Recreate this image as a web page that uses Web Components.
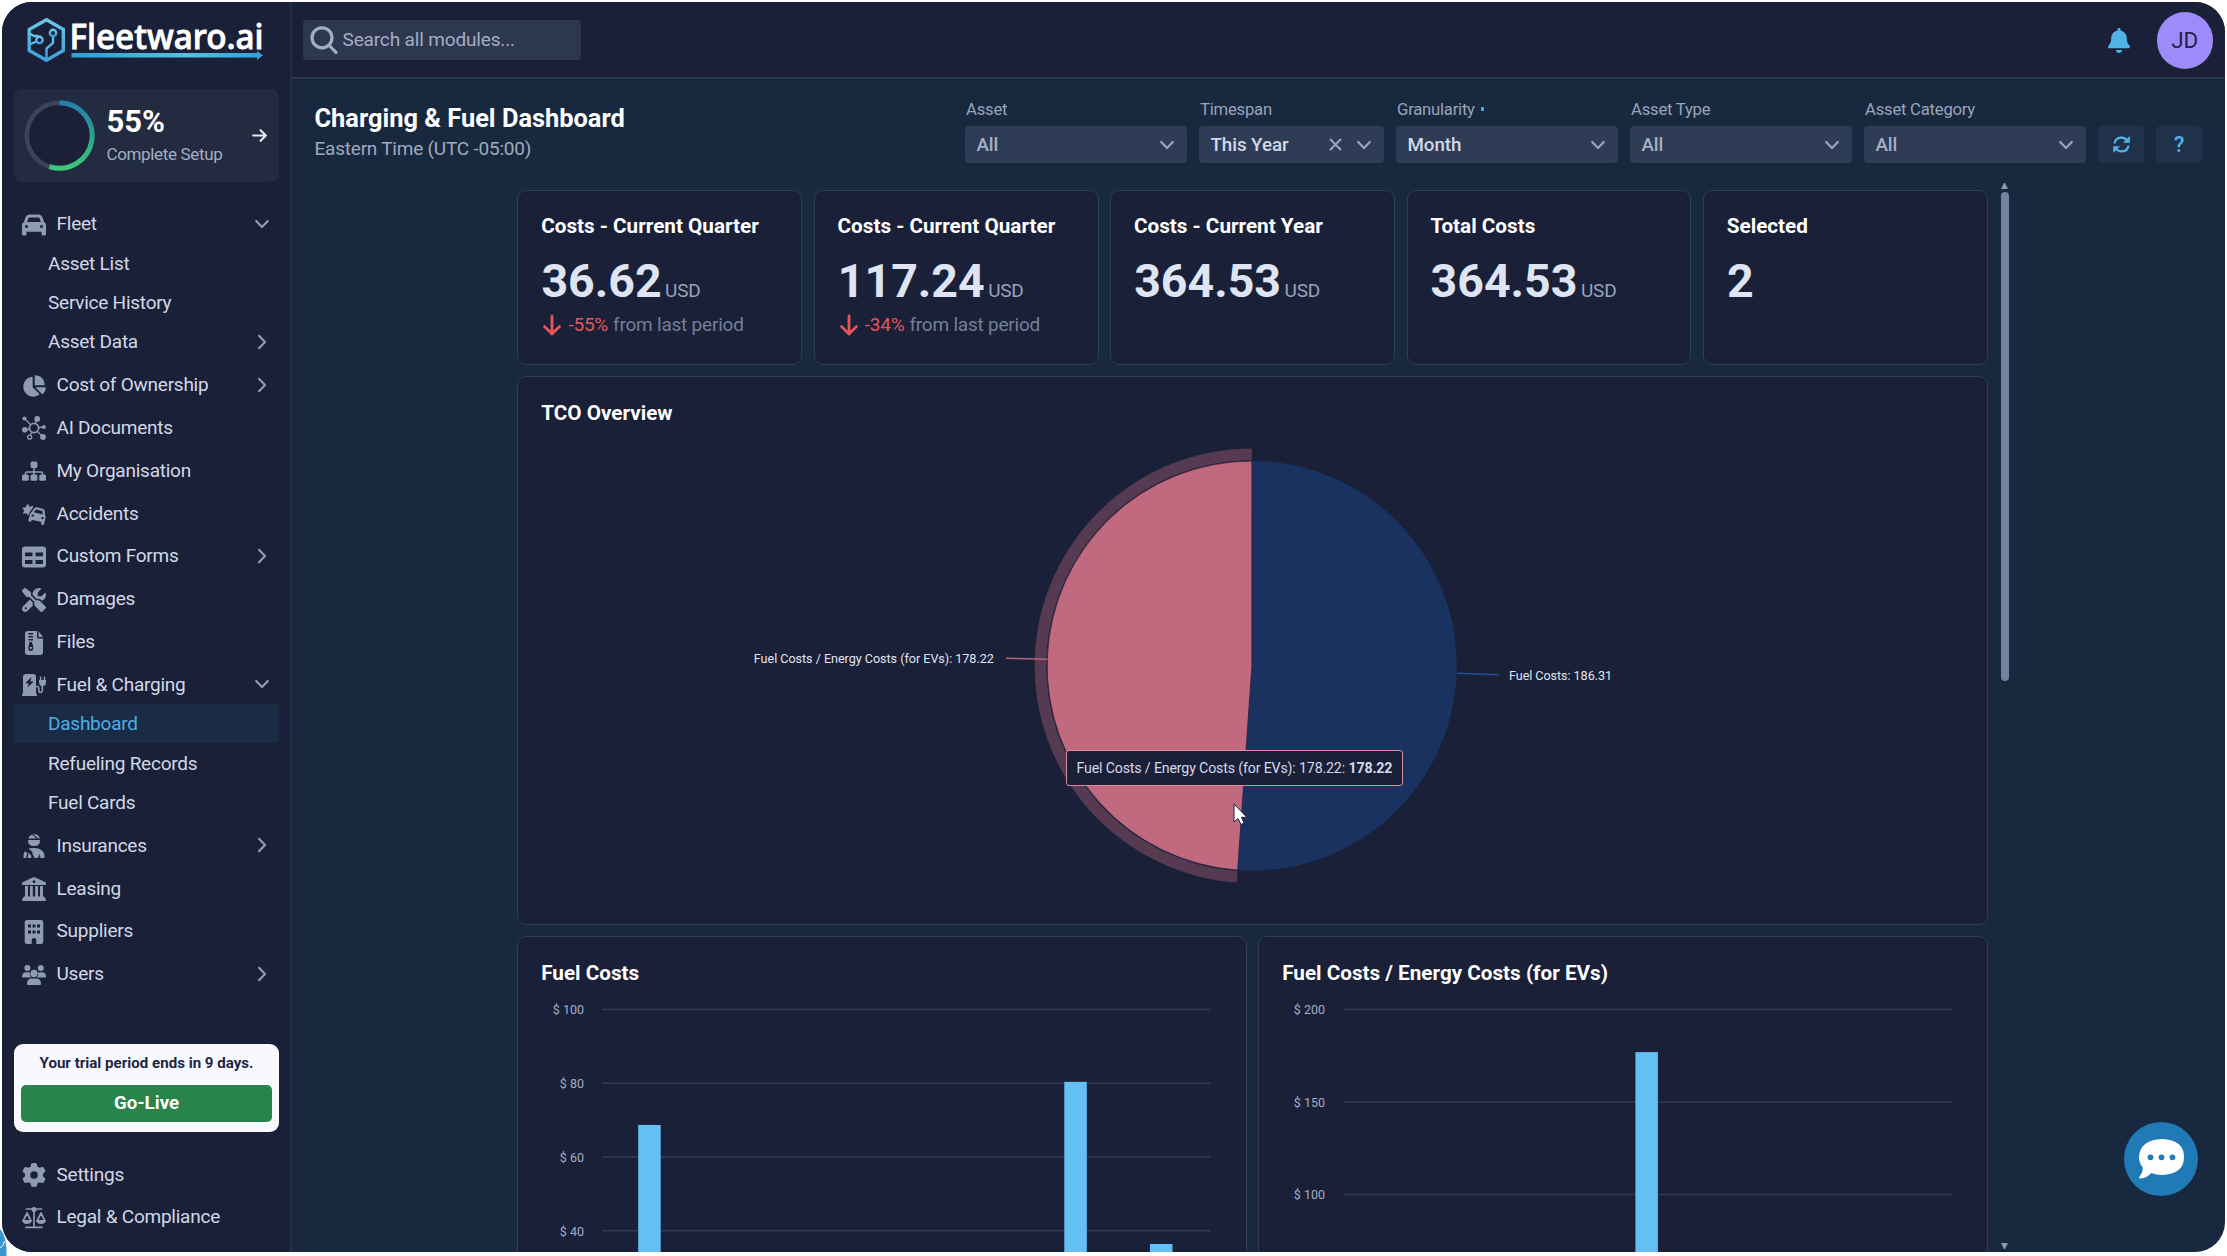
<!DOCTYPE html>
<html lang="en">
<head>
<meta charset="utf-8">
<title>Charging &amp; Fuel Dashboard</title>
<style>
html,body{ margin:0; height:100%; background:#fff; overflow:hidden }
body{ font-family:Roboto, "Liberation Sans", sans-serif; color:#d3d8e6; padding:2px; box-sizing:border-box; position:relative }
.corner{ position:absolute; left:0; bottom:0; width:8px; height:30px }
</style>
</head>
<body>
<svg class="corner" viewBox="0 0 8 30"><path d="M0 3Q7 10 6.500 30H0z" fill="#3b97cf"/><path d="M0 22Q4 20 4.500 15" stroke="#fff" fill="none"/></svg>
<fw-app>
  <fw-sidebar slot="side">
    <fw-setup percent="55" label="Complete Setup"></fw-setup>
    <fw-nav-item icon="car" arrow="down">Fleet</fw-nav-item>
    <fw-nav-item sub>Asset List</fw-nav-item>
    <fw-nav-item sub>Service History</fw-nav-item>
    <fw-nav-item sub arrow="right">Asset Data</fw-nav-item>
    <fw-nav-item icon="pie" arrow="right">Cost of Ownership</fw-nav-item>
    <fw-nav-item icon="nodes">AI Documents</fw-nav-item>
    <fw-nav-item icon="sitemap">My Organisation</fw-nav-item>
    <fw-nav-item icon="crash">Accidents</fw-nav-item>
    <fw-nav-item icon="table" arrow="right">Custom Forms</fw-nav-item>
    <fw-nav-item icon="tools">Damages</fw-nav-item>
    <fw-nav-item icon="zip">Files</fw-nav-item>
    <fw-nav-item icon="station" arrow="down">Fuel &amp; Charging</fw-nav-item>
    <fw-nav-item sub active>Dashboard</fw-nav-item>
    <fw-nav-item sub>Refueling Records</fw-nav-item>
    <fw-nav-item sub>Fuel Cards</fw-nav-item>
    <fw-nav-item icon="injured" arrow="right">Insurances</fw-nav-item>
    <fw-nav-item icon="bank">Leasing</fw-nav-item>
    <fw-nav-item icon="building">Suppliers</fw-nav-item>
    <fw-nav-item icon="users" arrow="right">Users</fw-nav-item>
    <fw-trial slot="foot" text="Your trial period ends in 9 days.">Go-Live</fw-trial>
    <fw-nav-item slot="foot" icon="gear">Settings</fw-nav-item>
    <fw-nav-item slot="foot" icon="scale">Legal &amp; Compliance</fw-nav-item>
  </fw-sidebar>

  <fw-topbar slot="top" initials="JD">Search all modules...</fw-topbar>

  <fw-page-head slot="head" heading="Charging &amp; Fuel Dashboard" sub="Eastern Time (UTC -05:00)">
    <fw-select label="Asset" empty>All</fw-select>
    <fw-select label="Timespan" clear style="width:185px">This Year</fw-select>
    <fw-select label="Granularity" required>Month</fw-select>
    <fw-select label="Asset Type" empty>All</fw-select>
    <fw-select label="Asset Category" empty>All</fw-select>
    <fw-tool icon="refresh"></fw-tool>
    <fw-tool>?</fw-tool>
  </fw-page-head>

  <fw-grid>
    <fw-stat heading="Costs - Current Quarter" unit="USD" delta="-55%">36.62</fw-stat>
    <fw-stat heading="Costs - Current Quarter" unit="USD" delta="-34%">117.24</fw-stat>
    <fw-stat heading="Costs - Current Year" unit="USD">364.53</fw-stat>
    <fw-stat heading="Total Costs" unit="USD">364.53</fw-stat>
    <fw-stat heading="Selected">2</fw-stat>
    <fw-card heading="TCO Overview" style="grid-column:1/-1; height:548.7px"><fw-pie></fw-pie></fw-card>
    <fw-card heading="Fuel Costs" style="grid-column:1/6; height:560px">
      <fw-bars max="100" min="40" step="20" gap="73.7" bars="120.2:68.7,546.3:80.4,632:36.4"></fw-bars>
    </fw-card>
    <fw-card heading="Fuel Costs / Energy Costs (for EVs)" style="grid-column:6/11; height:560px">
      <fw-bars max="200" min="100" step="50" gap="92.4" bars="376.4:177"></fw-bars>
    </fw-card>
  </fw-grid>
</fw-app>

<script>
// icons: [viewBox, markup]
const ICONS = {
  car:["0 0 512 512",'<path d="M135.2 117.4L109.1 192H402.9l-26.1-74.6C372.300 104.600 360.200 96 346.600 96H165.400c-13.600 0-25.700 8.600-30.200 21.400zM39.600 196.800L74.800 96.300C88.300 57.800 124.600 32 165.400 32H346.600c40.800 0 77.100 25.800 90.600 64.300l35.200 100.500c23.200 9.600 39.600 32.500 39.600 59.200V400v48c0 17.700-14.300 32-32 32H448c-17.700 0-32-14.300-32-32V400H96v48c0 17.700-14.300 32-32 32H32c-17.700 0-32-14.300-32-32V400 256c0-26.700 16.400-49.600 39.600-59.200zM128 288a32 32 0 1 0 -64 0 32 32 0 1 0 64 0zm288 32a32 32 0 1 0 0-64 32 32 0 1 0 0 64z"/>'],
  pie:["0 0 576 512",'<path d="M304 240V16.6c0-9 7-16.6 16-16.6C443.7 0 544 100.3 544 224c0 9-7.6 16-16.6 16H304zM32 272C32 150.700 122.100 50.300 239 34.300c9.200-1.300 17 6.100 17 15.400V288L412.500 444.500c6.700 6.700 6.200 17.700-1.500 23.100C371.800 495.600 323.800 512 272 512C139.500 512 32 404.600 32 272zm526.400 16c9.300 0 16.600 7.800 15.400 17c-7.700 55.900-34.600 105.600-73.900 142.300c-6 5.600-15.400 5.200-21.200-.7L320 288H558.400z"/>'],
  nodes:["0 0 24 24",'<g stroke="currentColor" stroke-width="1.300" fill="none"><circle cx="12" cy="12" r="4.600" stroke-width="1.700"/><path d="M3 3l5.700 5.700M15 2.800l-1.500 4.900M3 14l4.500-1M16.700 11.500l5-.5M15.200 15.300l5.300 5.200M9.800 16.100L8 20"/><circle cx="7.700" cy="21.200" r="2"/></g><circle cx="2.400" cy="2.400" r="2"/><circle cx="15.200" cy="2.900" r="2.900"/><circle cx="2.800" cy="13.800" r="2.800"/><circle cx="21.900" cy="11" r="2"/><circle cx="21" cy="21" r="2.900"/>'],
  sitemap:["0 0 24 24",'<rect x="8.600" y="2.500" width="6.800" height="6.500" rx="1.500"/><path d="M12 9v7M3.400 16v-1.300q0-1.700 1.700-1.700h13.800q1.700 0 1.700 1.700V16" fill="none" stroke="currentColor" stroke-width="1.500"/><rect y="15.500" width="6.800" height="6.300" rx="1.500"/><rect x="8.600" y="15.500" width="6.800" height="6.300" rx="1.500"/><rect x="17.200" y="15.500" width="6.800" height="6.300" rx="1.500"/>'],
  crash:["0 0 24 24",'<path d="M5.500 1.500l2.100 3.200 3.900-.9-1.200 3L8 9.500l-1.700 4.200-2-2.500-3.600.5 1.700-3.200L0 5.800l3.800-.5z"/><g transform="rotate(14 15 13)"><path fill-rule="evenodd" d="M8.700 12l2.100-4.800Q11.600 5.500 13.500 5.500h5.300q1.900 0 2.700 1.700L23 11.500q1 .8 1 2.200v6.500q0 1-1 1h-1q-1 0-1-1v-1.400H11v1.400q0 1-1 1H9q-1 0-1-1v-6q0-1.400.7-2.200zM11.200 11.200h9.300l-1.200-3.300H12.600zM10.900 13.500a1.200 1.200 0 1 0 .1 0zM21 13.500a1.200 1.200 0 1 0 .1 0z"/></g>'],
  table:["0 0 24 24",'<path fill-rule="evenodd" d="M3 1.500H21Q24 1.500 24 4.500V19.500Q24 22.500 21 22.500H3Q0 22.500 0 19.500V4.500Q0 1.500 3 1.500zM3 7.500V11.300H10.500V7.500zM13.500 7.500V11.300H21V7.500zM3 15V19H10.500V15zM13.500 15V19H21V15z"/>'],
  tools:["0 0 512 512",'<path d="M78.6 5C69.1-2.4 55.6-1.5 47 7L7 47c-8.500 8.500-9.400 22-2.100 31.600l80 104c4.500 5.900 11.600 9.400 19 9.400h54.100l109 109c-14.700 29-10 65.400 14.300 89.600l112 112c12.500 12.500 32.800 12.500 45.300 0l64-64c12.500-12.500 12.500-32.800 0-45.300l-112-112c-24.200-24.200-60.600-29-89.600-14.300l-109-109V104c0-7.500-3.500-14.500-9.400-19L78.600 5zM19.900 396.100C7.200 408.800 0 426.100 0 444.100C0 481.600 30.400 512 67.900 512c18 0 35.300-7.200 48-19.900L233.700 374.300c-7.800-20.900-9-43.600-3.600-65.100l-61.700-61.700L19.900 396.100zM512 144c0-10.500-1.100-20.700-3.200-30.500c-2.400-11.200-16.100-14.100-24.200-6l-63.900 63.900c-3 3-7.100 4.700-11.300 4.700H352c-8.800 0-16-7.200-16-16V102.600c0-4.200 1.700-8.300 4.700-11.300l63.900-63.900c8.100-8.100 5.200-21.800-6-24.200C388.700 1.100 378.500 0 368 0C288.500 0 224 64.500 224 144l0 .8 85.300 85.300c36-9.100 75.800 .5 104 28.700L429 274.500c49-23 83-72.800 83-130.500zM56 432a24 24 0 1 1 48 0 24 24 0 1 1 -48 0z"/>'],
  zip:["0 0 24 24",'<path fill-rule="evenodd" d="M6 0H15V6Q15 7.500 16.500 7.500H21V21Q21 24 18 24H6Q3 24 3 21V3Q3 0 6 0zM6.500 2h4.500v1.500H6.500zM6.500 5h4.500v1.500H6.500zM6.500 8h4.500v1.500H6.500zM7.500 11l-1.200 5.500Q6 20 8.800 20t2.500-3.500L10 11zM7.600 16h2.500v1.700H7.600z"/><path d="M16.500 0L21 6H16.500z"/>'],
  station:["0 0 24 24",'<path fill-rule="evenodd" d="M4 1H11Q14 1 14 4V20.500Q15 20.500 15 21.500V22.300Q15 23 14 23H1Q0 23 0 22.300V21.500Q0 20.500 1 20.500V4Q1 1 4 1zM9.500 4L4 9.500Q3.500 10.500 4.500 10.500H6.800L5.300 14.500 11 9.500Q11.500 8.500 10.500 8.500H8.500z"/><path d="M14 13.500h1q1.800 0 1.800 1.800v2.200q0 2 1.700 2t1.800-2V12" fill="none" stroke="currentColor" stroke-width="1.600"/><path d="M17 7h7v2.500q0 3.500-3.500 3.500T17 9.500zM17.800 3.500h1.500V7h-1.500zM21.700 3.500h1.500V7h-1.500z"/>'],
  injured:["0 0 24 24",'<path d="M6.200 4.500Q7 1.500 10 .6L14.500 4.500zM12 0q3 0 4.800 2.300L18 4.500h-1.600L11 .1zM6 6H18Q18.300 12 12 12T6 6zM1.500 23.500Q1 19.500 3 17.200L5.300 19 4 24H2Q1.500 24 1.500 23.500zM6.500 18.500L9.500 22 9 24H5.700zM6.500 14.600Q8 14 12 14 22 14 22.700 22.500 22.700 24 21.200 24H18.500Q18.300 19 13 19H11.500zM10 18.500h3.500Q17 19 17 21.500T14.500 24H12.500z"/>'],
  bank:["0 0 24 24",'<path fill-rule="evenodd" d="M11.300.2Q12 0 12.700.2L23.500 5.200Q24 5.500 24 6V7Q24 8 23 8H1Q0 8 0 7V6Q0 5.500.5 5.200zM12 3.300a1.400 1.400 0 1 0 .1 0z"/><path d="M3 9H6V19.500H3zM8 9h2.800V19.500H8zM13.200 9H16V19.500H13.200zM18 9h3V19.500H18zM2 19.500H22L24 22.500Q24 24 23 24H1Q0 24 0 22.500z"/>'],
  building:["0 0 24 24",'<path fill-rule="evenodd" d="M5 0H19Q21.300 0 21.300 2.300V21.700Q21.300 24 19 24H14.300V20.300Q14.300 18 12 18T9.700 20.300V24H5Q2.700 24 2.700 21.700V2.300Q2.700 0 5 0zM6 4.500V7.500H9V4.500zM10.500 4.500V7.500H13.500V4.500zM15 4.500V7.500H18V4.500zM6 10.500V13.500H9V10.500zM10.500 10.500V13.500H13.500V10.500zM15 10.500V13.500H18V10.500z"/>'],
  users:["0 0 24 24",'<circle cx="5.400" cy="5" r="3"/><circle cx="18.800" cy="5" r="3"/><circle cx="12" cy="10.500" r="3.700"/><path d="M0 13.800Q0 9.500 4 9.300H6.500L8 9.800Q7 12.500 9 14.500H1Q0 14.500 0 13.800zM24 13.800Q24 9.500 20 9.300H17.500L16 9.800Q17 12.500 15 14.500H23Q24 14.500 24 13.800zM5 20.900Q5 15.600 9.500 15.500H14.500Q19 15.600 19 20.900 19 22 18 22H6Q5 22 5 20.900z"/>'],
  gear:["0 0 512 512",'<path d="M495.9 166.600c3.200 8.700 .5 18.400-6.400 24.600l-43.300 39.400c1.100 8.300 1.700 16.800 1.700 25.400s-.6 17.100-1.700 25.400l43.300 39.400c6.900 6.200 9.600 15.900 6.400 24.600c-4.400 11.900-9.700 23.300-15.800 34.300l-4.700 8.100c-6.600 11-14 21.400-22.100 31.200c-5.900 7.200-15.700 9.600-24.500 6.800l-55.700-17.700c-13.400 10.300-28.200 18.900-44 25.400l-12.500 57.100c-2 9.100-9 16.300-18.200 17.800c-13.800 2.300-28 3.500-42.500 3.500s-28.700-1.200-42.500-3.500c-9.200-1.500-16.200-8.700-18.200-17.800l-12.500-57.100c-15.800-6.500-30.600-15.100-44-25.400L83.100 425.900c-8.800 2.800-18.600 .3-24.500-6.800c-8.100-9.800-15.500-20.200-22.100-31.200l-4.700-8.100c-6.100-11-11.400-22.400-15.800-34.300c-3.200-8.700-.5-18.400 6.400-24.600l43.300-39.400C64.600 273.100 64 264.600 64 256s.6-17.100 1.700-25.400L22.400 191.200c-6.900-6.200-9.600-15.900-6.400-24.600c4.400-11.900 9.700-23.300 15.800-34.300l4.700-8.100c6.600-11 14-21.400 22.100-31.200c5.900-7.200 15.700-9.600 24.500-6.800l55.700 17.700c13.400-10.300 28.200-18.900 44-25.400l12.500-57.100c2-9.100 9-16.300 18.200-17.800C227.300 1.200 241.500 0 256 0s28.700 1.200 42.500 3.500c9.200 1.500 16.200 8.700 18.200 17.800l12.500 57.100c15.800 6.500 30.600 15.100 44 25.400l55.700-17.700c8.800-2.800 18.600-.3 24.500 6.800c8.100 9.800 15.500 20.200 22.100 31.200l4.700 8.100c6.100 11 11.400 22.400 15.800 34.300zM256 336a80 80 0 1 0 0-160 80 80 0 1 0 0 160z"/>'],
  scale:["0 0 24 24",'<g fill="none" stroke="currentColor" stroke-width="1.700" stroke-linecap="round" stroke-linejoin="round"><path d="M4.500 3H19.500M12 3V20.500M4 21.300H20"/><path d="M1.300 14.500L5 7l3.700 7.500M15.300 14.500L19 7l3.700 7.500"/></g><circle cx="12" cy="3.500" r="2.500"/><path d="M0 14H10Q9.500 18 5 18T0 14zM14 14H24Q23.500 18 19 18T14 14z"/>'],
  bell:["0 0 448 512",'<path d="M224 0c-17.700 0-32 14.300-32 32V51.200C119 66 64 130.600 64 208v18.800c0 47-17.300 92.400-48.500 127.600l-7.400 8.300c-8.400 9.400-10.400 22.900-5.300 34.400S19.400 416 32 416H416c12.600 0 24-7.400 29.200-18.900s3.100-25-5.300-34.400l-7.400-8.300C401.300 319.200 384 273.900 384 226.800V208c0-77.400-55-142-128-156.800V32c0-17.700-14.300-32-32-32zm45.300 493.300c12-12 18.700-28.300 18.700-45.300H224 160c0 17 6.700 33.300 18.700 45.300s28.300 18.700 45.300 18.700s33.300-6.700 45.300-18.700z"/>'],
  refresh:["0 0 20 20",'<g fill="none" stroke="currentColor" stroke-width="2.200"><path d="M2.500 9Q3.500 3.200 9.500 2.800 13.500 2.700 16.500 6M17.500 11Q16.500 16.800 10.500 17.200 6.500 17.300 3.500 14"/></g><path d="M18.800 1V8.200H11.600zM1.200 19V11.800H8.400z"/>'],
  search:["0 0 28 28",'<g fill="none" stroke="currentColor" stroke-width="3.200" stroke-linecap="round"><circle cx="12" cy="11.800" r="10"/><path d="M19.300 19.500L26 26.300"/></g>'],
  down:["0 0 16 16",'<path d="M2.200 5l5.800 6 5.800-6" fill="none" stroke="currentColor" stroke-width="2.200" stroke-linecap="round" stroke-linejoin="round"/>'],
  right:["0 0 16 16",'<path d="M5 1.800l6 6.200-6 6.200" fill="none" stroke="currentColor" stroke-width="2.200" stroke-linecap="round" stroke-linejoin="round"/>'],
  close:["0 0 16 16",'<path d="M2.700 2.700l10.600 10.600M13.300 2.700L2.700 13.300" fill="none" stroke="currentColor" stroke-width="2.200" stroke-linecap="round"/>'],
  go:["0 0 16 16",'<path d="M2 8h12M9 3l5 5-5 5" fill="none" stroke="currentColor" stroke-width="2" stroke-linecap="round" stroke-linejoin="round"/>'],
  drop:["0 0 20 22",'<path d="M10 2v18M2.500 12.500L10 20l7.500-7.500" fill="none" stroke="currentColor" stroke-width="2.800" stroke-linecap="round" stroke-linejoin="round"/>'],
};
const svg = (name, w, h = w) => `<svg width="${w}" height="${h}" viewBox="${ICONS[name][0]}" fill="currentColor">${ICONS[name][1]}</svg>`;

// base: render() returns the shadow markup
class FwElement extends HTMLElement{
  constructor(){ super(); this.attachShadow({mode:"open"}); }
  connectedCallback(){ this.shadowRoot.innerHTML = `<style>svg{ display:block; flex:none } *{ box-sizing:border-box }</style>` + this.render(); }
  attr(n){ return (this.getAttribute(n) || "").replace(/&/g, "&amp;"); }
}

customElements.define("fw-app", class extends FwElement{
  render(){ return `
<style>
:host{ display:grid; grid-template-columns:290px 1fr; width:2223px; height:1250px; border-radius:30px; overflow:hidden; background:#18283f; position:relative; box-sizing:border-box }
.main{ display:flex; flex-direction:column; min-width:0; min-height:0 }
.scroll{ flex:1; min-height:0; display:flex; overflow:hidden; padding-left:225.400px }
.bar{ width:9px; margin-left:12.500px; display:flex; flex-direction:column; align-items:center; justify-content:space-between; padding:1px 0 3px }
.thumb{ width:8px; height:489px; border-radius:4px; background:#7083a0; margin-top:3px }
.tri{ width:7px; border:3.500px solid transparent; border-bottom:6px solid #8b98ae; border-top:0 }
.tri.dn{ border:3.500px solid transparent; border-top:6px solid #8b98ae; border-bottom:0 }
.chat{ position:absolute; right:27.500px; bottom:56px; width:74px; height:74px; border-radius:50%; background:#1f7ab5; display:grid; place-items:center }
</style>
<slot name="side"></slot>
<div class="main">
  <slot name="top"></slot>
  <slot name="head"></slot>
  <div class="scroll"><slot></slot><div class="bar"><div><div class="tri" style="margin-left:.5px"></div><div class="thumb"></div></div><div class="tri dn"></div></div></div>
</div>
<div class="chat"><svg width="46" height="40" viewBox="0 0 46 40"><path d="M24 0Q46 1 46 18T24 36Q18 36 13.500 34 8 39.500 1.500 39.500.500 39 1.500 37.500 5 33.500 4.800 28.500 1 24 1 18 2 1 24 0z" fill="#fff"/><g fill="#1f7ab5"><circle cx="12.500" cy="18.300" r="2.900"/><circle cx="23.500" cy="18.300" r="2.900"/><circle cx="34.500" cy="18.300" r="2.900"/></g></svg></div>`; }
});

customElements.define("fw-sidebar", class extends FwElement{
  render(){ return `
<style>
:host{ display:flex; flex-direction:column; background:#192038; border-right:2px solid #232f49; padding:0 11px 15.500px 12px; height:1250px; box-sizing:border-box }
.logo{ height:87px }
.foot{ margin-top:auto }
</style>
<svg class="logo" width="264" height="87" viewBox="14 2 264 87">
  <defs><linearGradient id="g" x1="0" y1="0" x2="0" y2="1"><stop stop-color="#6cc7e6"/><stop offset="1" stop-color="#3f9fd8"/></linearGradient>
  <linearGradient id="u"><stop stop-color="#2e9fd3"/><stop offset=".6" stop-color="#56c0e4"/><stop offset="1" stop-color="#2f9fd6"/></linearGradient></defs>
  <g fill="none" stroke="url(#g)" stroke-width="3.400"><path d="M46.500 19.800L63.300 29.500V50.500L46.500 60.200 29.200 50.500V29.500z"/><g stroke-width="2.400"><circle cx="39.500" cy="40" r="3.200"/><path d="M29.500 33.500l4.500 2.500h4.500M36.500 41.500l-7 3M46.500 60V48.500l6.500-5.500v-7"/><circle cx="53" cy="33" r="3.200"/></g></g>
  <text x="69.500" y="49" textLength="194" lengthAdjust="spacingAndGlyphs" font-family="Noto Sans" font-weight="500" font-size="34.500" fill="#fff" stroke="#fff" stroke-width=".9">Fleetwaro.ai</text>
  <path d="M71.500 53H257V51L263 55.200 257 60V57.500H71.500z" fill="url(#u)"/>
</svg>
<slot></slot>
<div class="foot"><slot name="foot"></slot></div>`; }
});

customElements.define("fw-setup", class extends FwElement{
  render(){ return `
<style>
:host{ display:flex; align-items:center; height:92.500px; background:#232b41; border-radius:8px; padding:0 11px 0 10px; margin-bottom:19.200px; box-sizing:border-box }
.t{ margin-left:11.500px; flex:1 }
b{ display:block; font:700 31px/32px Roboto; color:#fff; margin-top:1px }
span{ display:block; font-size:17px; letter-spacing:-.350px; line-height:22px; color:#a4adc2; margin-top:5px; white-space:nowrap }
</style>
<svg width="71" height="71" viewBox="0 0 71 71"><defs><linearGradient id="r" x1="0" y1="0" x2="0" y2="1"><stop stop-color="#237fae"/><stop offset=".5" stop-color="#2ca08f"/><stop offset="1" stop-color="#3cc878"/></linearGradient></defs>
<circle cx="35.500" cy="35.500" r="32.700" fill="#192038" stroke="#3b445a" stroke-width="4.500"/><path d="M35.500 2.800A32.700 32.700 0 1 1 25.400 66.600" fill="none" stroke="url(#r)" stroke-width="5"/></svg>
<div class="t"><b>${this.attr("percent")}%</b><span>${this.attr("label")}</span></div>
<span style="color:#e6e9f2;margin:0">${svg("go", 17)}</span>`; }
});

customElements.define("fw-nav-item", class extends FwElement{
  render(){
    const icon = this.attr("icon"), arrow = this.attr("arrow");
    return `
<style>
:host{ display:flex; align-items:center; height:39.330px; margin-top:3.500px; padding:0 9px 0 7.500px; font-size:19px; letter-spacing:-.240px; color:#d3d8e6; box-sizing:border-box; white-space:nowrap }
:host([sub]){ margin-top:0; padding-left:34px }
:host([active]){ background:#1a2b45; color:#4faee6; border-radius:4px }
i{ color:#8f9ab3; margin-right:11px; margin-top:2px }
.a{ margin-left:auto; color:#8f9ab3 }
</style>
${icon ? `<i>${svg(icon, 24)}</i>` : ""}<slot></slot>${arrow ? `<span class="a">${svg(arrow, 16)}</span>` : ""}`; }
});

customElements.define("fw-trial", class extends FwElement{
  render(){ return `
<style>
:host{ display:block; background:#f7f9fe; border-radius:9px; height:88.700px; padding:6.500px 7px 0; margin-bottom:22px; text-align:center; box-sizing:border-box }
p{ margin:0; font:700 15.100px/26px Roboto; color:#1e2740; white-space:nowrap }
button{ display:block; width:100%; height:37px; margin-top:8.500px; border:0; border-radius:5px; background:#28844a; color:#fff; font:700 18.700px Roboto; padding:0 }
</style>
<p>${this.attr("text")}</p><button><slot></slot></button>`; }
});

customElements.define("fw-topbar", class extends FwElement{
  render(){ return `
<style>
:host{ display:flex; align-items:center; height:76.500px; background:#192038; border-bottom:2px solid #2b3750; padding:0 12px 0 11px; box-sizing:border-box; flex:none }
.search{ display:flex; align-items:center; gap:5px; width:278px; height:40.500px; border-radius:4px; background:#2e3750; color:#a4adc2; font-size:19px; letter-spacing:-.150px; padding-left:6.500px; margin-top:1px }
.bell{ margin-left:auto; color:#50b4e8; margin-right:27px; margin-top:2px }
.av{ width:56.500px; height:56.500px; border-radius:50%; background:#9d8bf9; color:#262249; font-size:22.500px; display:grid; place-items:center; margin-top:2px }
</style>
<div class="search">${svg("search", 28)}<slot></slot></div>
<span class="bell">${svg("bell", 22, 25)}</span><div class="av">${this.attr("initials")}</div>`; }
});

customElements.define("fw-page-head", class extends FwElement{
  render(){ return `
<style>
:host{ display:flex; justify-content:space-between; height:103px; padding:21px 23px 0 22.500px; box-sizing:border-box; flex:none }
h1{ margin:3.500px 0 0; font:700 25.400px/30px Roboto; color:#fff; white-space:nowrap }
p{ margin:3.500px 0 0; font-size:19px; letter-spacing:-.220px; line-height:24px; color:#a0aabf }
.tools{ display:flex; gap:12px; align-items:flex-end; height:63px }
</style>
<div><h1>${this.attr("heading")}</h1><p>${this.attr("sub")}</p></div><div class="tools"><slot></slot></div>`; }
});

customElements.define("fw-select", class extends FwElement{
  render(){ return `
<style>
:host{ display:block; width:222px; --fg:#d3d8e6 }
:host([empty]){ --fg:#a6b0c4 }
label{ display:block; font-size:16.700px; letter-spacing:-.240px; line-height:22px; color:#98a4ba; margin-bottom:5px; white-space:nowrap; padding-left:1px }
label i{ display:inline-block; width:3.500px; height:3.500px; background:#4faee6; border-radius:1px; margin-left:6px; vertical-align:4px }
.box{ display:flex; align-items:center; height:36.700px; border-radius:4px; background:#2e3c56; color:var(--fg); font-size:18.800px; font-weight:500; letter-spacing:-.080px; padding:1.500px 12.500px 0 11.500px }
.ic{ margin-left:auto; display:flex; gap:13px; color:#9aa6bb }
</style>
<label>${this.attr("label")}${this.hasAttribute("required") ? "<i></i>" : ""}</label>
<div class="box"><slot></slot><span class="ic">${this.hasAttribute("clear") ? svg("close", 15) : ""}${svg("down", 16)}</span></div>`; }
});

customElements.define("fw-tool", class extends FwElement{
  render(){ return `
<style>:host{ display:grid; place-items:center; width:46px; height:36.700px; border-radius:4px; background:#20314a; color:#50b4e8; font-size:22px; font-weight:500 }</style>
${this.attr("icon") ? svg(this.attr("icon"), 19) : "<slot></slot>"}`; }
});

customElements.define("fw-grid", class extends FwElement{
  render(){ return `
<style>
:host{ display:grid; grid-template-columns:repeat(10, 1fr); column-gap:11.600px; row-gap:11.600px; width:1470.400px; align-content:start; padding-top:8.500px; flex:none; box-sizing:border-box }
</style><slot></slot>`; }
});

const CARD = `
:host{ display:block; background:#192038; border:1.500px solid #2f3d57; border-radius:9px; box-sizing:border-box; position:relative }
h2{ margin:0; padding:24px 22.800px 0; height:60px; font:700 20.700px/24px Roboto; color:#fff; white-space:nowrap; box-sizing:border-box }`;

customElements.define("fw-card", class extends FwElement{
  render(){ return `<style>${CARD}</style><h2>${this.attr("heading")}</h2><slot></slot>`; }
});

customElements.define("fw-stat", class extends FwElement{
  render(){
    const unit = this.attr("unit"), delta = this.attr("delta");
    return `
<style>${CARD}
:host{ grid-column:span 2; height:174.500px }
h2{ padding-top:23px }
.v{ padding:1.500px 23px 0; font:700 46.500px/56px Roboto; color:#dfe4f2; height:52px; white-space:nowrap }
.v small{ font-size:19px; font-weight:400; letter-spacing:-.200px; color:#98a4ba; margin-left:3.500px }
.d{ display:flex; align-items:center; gap:5px; padding:3px 23px 0; height:40px; font-size:19px; letter-spacing:-.220px; color:#747f98; white-space:nowrap }
.d em{ font-style:normal; color:#e5555b; display:flex; align-items:center; gap:6px; padding-left:1px }
</style>
<h2>${this.attr("heading")}</h2>
<div class="v"><slot></slot>${unit ? `<small>${unit}</small>` : ""}</div>
${delta ? `<div class="d"><em>${svg("drop", 20, 22)}${delta}</em><span>from last period</span></div>` : ""}`; }
});

customElements.define("fw-pie", class extends FwElement{
  render(){
    const cx = 733.9, cy = 228.8, r = 204.8, a = 186.31 / 364.53 * 2 * Math.PI;
    const p = (rad, t) => `${(cx + rad * Math.sin(t)).toFixed(2)} ${(cy - rad * Math.cos(t)).toFixed(2)}`;
    return `
<style>
:host{ display:block; position:relative }
text{ font:12.600px Roboto; fill:#e0e4f0 }
.tip{ position:absolute; left:547.500px; top:313px; height:36px; width:337px; display:flex; align-items:center; justify-content:center; gap:3.500px; background:#192038; border:1.500px solid #d98c9f; border-radius:3px; font-size:14.200px; letter-spacing:-.160px; color:#d5daea; white-space:nowrap }
.cur{ position:absolute; left:714.500px; top:365.500px }
</style>
<svg width="1467" height="485" viewBox="0 0 1467 485">
  <path d="M${cx} ${cy}L${p(r, 0)}A${r} ${r} 0 1 1 ${p(r, a)}z" fill="#1a325f"/>
  <path d="M${p(205.600, a)}A205.600 205.600 0 0 1 ${p(205.600, 2 * Math.PI)}L${p(217.300, 2 * Math.PI)}A217.300 217.300 0 0 0 ${p(217.300, a)}z" fill="#553a52"/>
  <path d="M${cx} ${cy}L${p(r, a)}A${r} ${r} 0 0 1 ${p(r, 2 * Math.PI)}z" fill="#c1697e" stroke="#2a2340" stroke-width=".8"/>
  <path d="M488 221.200L529 222.200" stroke="#b0647b" stroke-width="1.500"/>
  <path d="M939 236.200L981 237.700" stroke="#22508c" stroke-width="1.500"/>
  <text x="475.800" y="225.800" text-anchor="end" textLength="240">Fuel Costs / Energy Costs (for EVs): 178.22</text>
  <text x="991" y="243.200" textLength="103">Fuel Costs: 186.31</text>
</svg>
<div class="tip"><span>Fuel Costs / Energy Costs (for EVs): 178.22:</span><b>178.22</b></div>
<svg class="cur" width="15" height="23" viewBox="0 0 15 23"><path d="M1 1V19L5 15.500 8 21.500 11 20 8.500 14.300H13.800z" fill="#fff" stroke="#20223a" stroke-width="1"/></svg>`; }
});

customElements.define("fw-bars", class extends FwElement{
  render(){
    const max = +this.attr("max"), min = +this.attr("min"), step = +this.attr("step"), gap = +this.attr("gap"), top = 12.6;
    let out = "";
    for(let v = max, y = top; v >= min; v -= step, y += gap)
      out += `<path d="M84 ${y}H692.500" stroke="#313b54" stroke-width="1.500"/><text x="66" y="${y + 4.8}">$ ${v}</text>`;
    for(const b of this.attr("bars").split(",")){
      const [x, v] = b.split(":").map(Number), y = top + (max - v) / step * gap;
      out += `<rect x="${x}" y="${y}" width="22.500" height="${top + max / step * gap - y}" fill="#64bff4"/>`;
    }
    return `<style>:host{ display:block } text{ font:12.500px Roboto; fill:#a3aec2; text-anchor:end }</style>
<svg width="720" height="490" viewBox="0 0 720 490">${out}</svg>`; }
});
</script>
</body>
</html>
